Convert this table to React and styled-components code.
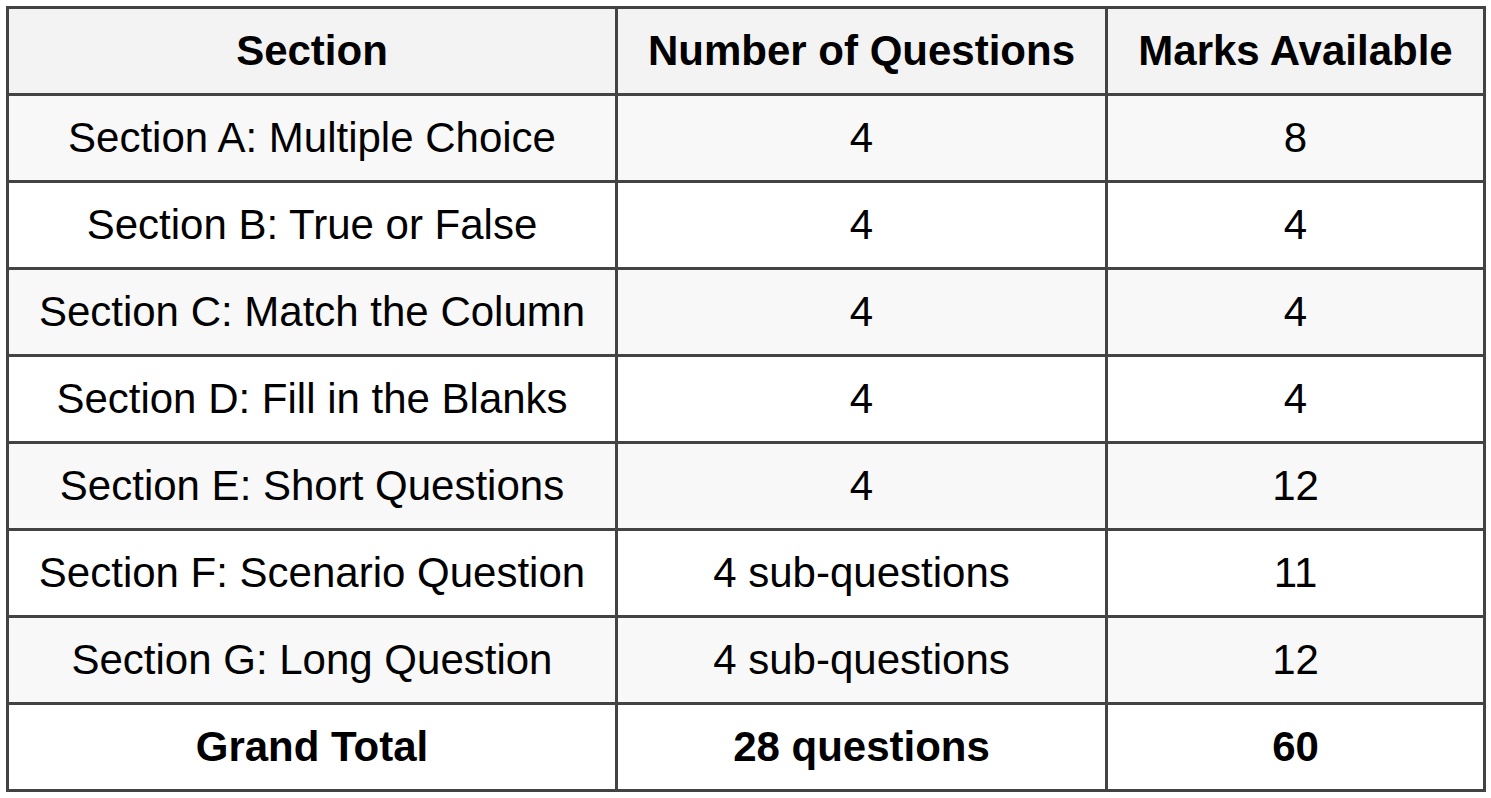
import styled, { createGlobalStyle } from "styled-components";

const GlobalStyle = createGlobalStyle`
  body {
    margin: 0;
    background: #ffffff;
    font-family: "Liberation Sans", Arial, sans-serif;
  }
`;

const Page = styled.div`
  padding: 6px;
`;

const Table = styled.table`
  border-collapse: separate;
  border-spacing: 0;
  table-layout: fixed;
  width: 1480px;
  border-top: 3px solid #434343;
  border-left: 3px solid #434343;
  font-family: "Liberation Sans", Arial, sans-serif;
  font-size: 42px;
  color: #000;
`;

const Row = styled.tr`
  background: ${({ $striped }) => ($striped ? "#f8f8f8" : "#ffffff")};
`;

const HeadCell = styled.th`
  box-sizing: border-box;
  height: 87px;
  padding: 0;
  background: #f3f3f3;
  border-right: 3px solid #434343;
  border-bottom: 3px solid #434343;
  font-weight: bold;
  text-align: center;
  vertical-align: middle;
`;

const Cell = styled.td`
  box-sizing: border-box;
  height: 87px;
  padding: 0;
  border-right: 3px solid #434343;
  border-bottom: 3px solid #434343;
  font-weight: ${({ $bold }) => ($bold ? "bold" : "normal")};
  text-align: center;
  vertical-align: middle;
  white-space: nowrap;
`;

const rows = [
  ["Section A: Multiple Choice", "4", "8"],
  ["Section B: True or False", "4", "4"],
  ["Section C: Match the Column", "4", "4"],
  ["Section D: Fill in the Blanks", "4", "4"],
  ["Section E: Short Questions", "4", "12"],
  ["Section F: Scenario Question", "4 sub-questions", "11"],
  ["Section G: Long Question", "4 sub-questions", "12"],
];

export default function App() {
  return (
    <Page>
      <GlobalStyle />
      <Table>
        <colgroup>
          <col style={{ width: 609 }} />
          <col style={{ width: 490 }} />
          <col style={{ width: 378 }} />
        </colgroup>
        <thead>
          <tr>
            <HeadCell>Section</HeadCell>
            <HeadCell>Number of Questions</HeadCell>
            <HeadCell>Marks Available</HeadCell>
          </tr>
        </thead>
        <tbody>
          {rows.map((r, i) => (
            <Row key={r[0]} $striped={i % 2 === 0}>
              <Cell>{r[0]}</Cell>
              <Cell>{r[1]}</Cell>
              <Cell>{r[2]}</Cell>
            </Row>
          ))}
          <Row>
            <Cell $bold>Grand Total</Cell>
            <Cell $bold>28 questions</Cell>
            <Cell $bold>60</Cell>
          </Row>
        </tbody>
      </Table>
    </Page>
  );
}
